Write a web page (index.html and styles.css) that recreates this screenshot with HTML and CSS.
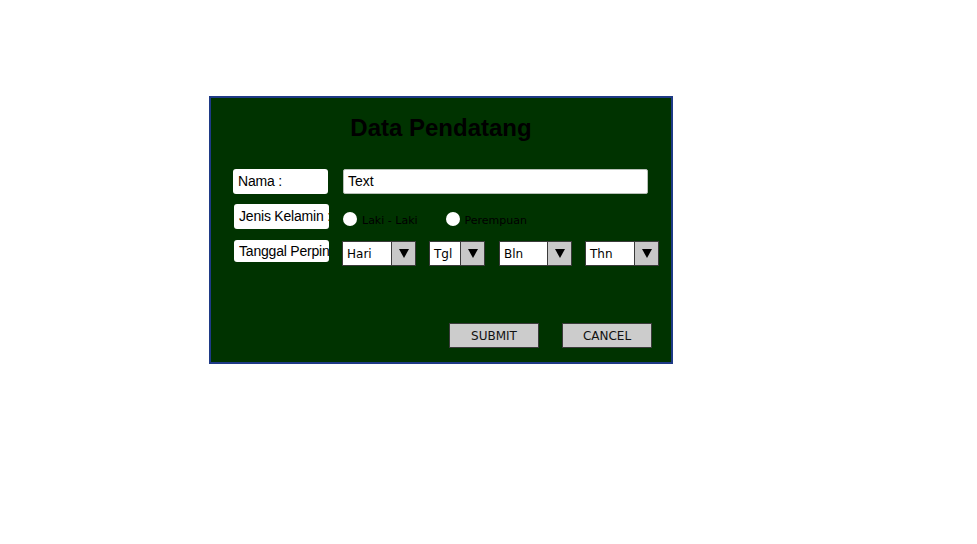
FILE: index.html
```html
<!DOCTYPE html>
<html>
<head>
<meta charset="utf-8">
<link rel="stylesheet" href="styles.css">
</head>
<body>
<div class="page">
  <div class="panel">
    <h1 class="title">Data Pendatang</h1>
    <div class="row row-nama">
      <div class="label">Nama :</div>
      <div class="textbox">Text</div>
    </div>
    <div class="row row-jk">
      <div class="label">Jenis Kelamin :</div>
      <div class="radios">
        <span class="radio"><span class="dot"></span><span class="rtext">Laki - Laki</span></span>
        <span class="radio radio-p"><span class="dot"></span><span class="rtext">Perempuan</span></span>
      </div>
    </div>
    <div class="row row-tgl">
      <div class="label label-short">Tanggal Perpindahan</div>
      <div class="selects">
        <div class="select w-hari"><span class="stext">Hari</span><span class="sbtn"><span class="arrow"></span></span></div>
        <div class="select w-tgl"><span class="stext">Tgl</span><span class="sbtn"><span class="arrow"></span></span></div>
        <div class="select w-bln"><span class="stext">Bln</span><span class="sbtn"><span class="arrow"></span></span></div>
        <div class="select w-thn"><span class="stext">Thn</span><span class="sbtn"><span class="arrow"></span></span></div>
      </div>
    </div>
    <div class="actions">
      <div class="btn">SUBMIT</div>
      <div class="btn">CANCEL</div>
    </div>
  </div>
</div>
</body>
</html>
```

FILE: styles.css
```css
html, body {
  margin: 0;
  padding: 0;
  background: #ffffff;
}
.page {
  padding: 96px 0 0 209px;
}
.panel {
  box-sizing: border-box;
  width: 464px;
  height: 268px;
  background: #003300;
  border: 2px solid #1e3a86;
  font-family: "Liberation Sans", Arial, sans-serif;
}
.title {
  margin: 15px 0 0 0;
  height: 29px;
  line-height: 29px;
  font-size: 24px;
  font-weight: bold;
  text-align: center;
  color: #000;
}
.row {
  display: flex;
  align-items: flex-start;
}
.label {
  box-sizing: border-box;
  width: 95px;
  height: 25px;
  background: #fff;
  border-radius: 3px;
  padding-left: 5px;
  font-size: 14px;
  letter-spacing: -0.2px;
  line-height: 25px;
  color: #000;
  white-space: nowrap;
  overflow: hidden;
}
.row-nama {
  margin-top: 27px;
  padding-left: 22px;
}
.textbox {
  box-sizing: border-box;
  margin-left: 15px;
  width: 305px;
  height: 25px;
  background: #fff;
  border: 1px solid #b8c0b8;
  border-radius: 2px;
  padding-left: 4px;
  font-size: 14px;
  line-height: 23px;
  color: #000;
}
.row-jk {
  margin-top: 10px;
  padding-left: 23px;
}
.radios {
  display: flex;
  margin-left: 14px;
  padding-top: 8px;
}
.radio {
  display: flex;
  align-items: center;
  font-family: "Comic Sans MS", "DejaVu Sans", sans-serif;
  font-size: 11px;
  color: #000;
}
.radio-p {
  margin-left: 28px;
}
.dot {
  width: 14px;
  height: 14px;
  border-radius: 50%;
  background: #fff;
  margin-right: 5px;
}
.rtext {
  position: relative;
  top: 1px;
}
.row-tgl {
  margin-top: 11px;
  padding-left: 23px;
}
.label-short {
  height: 22px;
  line-height: 22px;
}
.selects {
  display: flex;
  margin-left: 13px;
  margin-top: 1px;
}
.select {
  box-sizing: border-box;
  display: flex;
  height: 25px;
  background: #fff;
  border: 1px solid #3a3a3a;
  font-family: "Comic Sans MS", "DejaVu Sans", sans-serif;
  font-size: 12px;
  color: #000;
}
.stext {
  flex: 1;
  padding-left: 4px;
  line-height: 25px;
}
.sbtn {
  box-sizing: border-box;
  width: 24px;
  background: #c8c8c8;
  border-left: 1px solid #3a3a3a;
  display: flex;
  align-items: center;
  justify-content: center;
}
.arrow {
  width: 0;
  height: 0;
  border-left: 5px solid transparent;
  border-right: 5px solid transparent;
  border-top: 9px solid #000;
}
.w-hari { width: 74px; }
.w-tgl { width: 56px; margin-left: 13px; }
.w-bln { width: 73px; margin-left: 14px; }
.w-thn { width: 74px; margin-left: 13px; }
.actions {
  display: flex;
  justify-content: flex-end;
  gap: 23px;
  margin-top: 57px;
  padding-right: 19px;
}
.btn {
  box-sizing: border-box;
  width: 90px;
  height: 25px;
  background: #cccccc;
  border: 1px solid #3a3a3a;
  font-family: "Comic Sans MS", "DejaVu Sans", sans-serif;
  font-size: 12px;
  line-height: 24px;
  text-align: center;
  color: #111;
}
```
